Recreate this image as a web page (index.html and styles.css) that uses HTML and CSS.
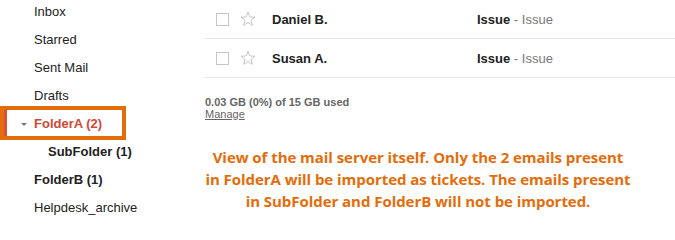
FILE: index.html
```html
<!DOCTYPE html>
<html>
<head>
<meta charset="utf-8">
<link rel="stylesheet" href="styles.css">
</head>
<body>
<div class="page">
  <nav class="sidebar">
    <ul class="folders">
      <li class="folder">Inbox</li>
      <li class="folder">Starred</li>
      <li class="folder">Sent Mail</li>
      <li class="folder">Drafts</li>
      <li class="folder folder-selected"><span class="caret"></span>FolderA (2)<span class="highlight"></span></li>
      <li class="folder folder-sub folder-unread">SubFolder (1)</li>
      <li class="folder folder-unread">FolderB (1)</li>
      <li class="folder">Helpdesk_archive</li>
    </ul>
  </nav>
  <main class="main">
    <div class="mail-list">
      <div class="mail-row">
        <span class="checkbox"></span>
        <svg class="star" viewBox="0 0 16 16" width="16" height="16"><path d="M8 1.2 L9.9 6 L15 6.2 L11 9.4 L12.4 14.4 L8 11.6 L3.6 14.4 L5 9.4 L1 6.2 L6.1 6 Z" fill="none" stroke="#c8c8c8" stroke-width="1" stroke-linejoin="round"/></svg>
        <span class="sender">Daniel B.</span>
        <span class="subject"><b>Issue</b><span class="snippet"> - Issue</span></span>
      </div>
      <div class="mail-row">
        <span class="checkbox"></span>
        <svg class="star" viewBox="0 0 16 16" width="16" height="16"><path d="M8 1.2 L9.9 6 L15 6.2 L11 9.4 L12.4 14.4 L8 11.6 L3.6 14.4 L5 9.4 L1 6.2 L6.1 6 Z" fill="none" stroke="#c8c8c8" stroke-width="1" stroke-linejoin="round"/></svg>
        <span class="sender">Susan A.</span>
        <span class="subject"><b>Issue</b><span class="snippet"> - Issue</span></span>
      </div>
    </div>
    <div class="storage">
      <div class="storage-used">0.03 GB (0%) of 15 GB used</div>
      <a class="storage-manage">Manage</a>
    </div>
    <p class="note">View of the mail server itself. Only the 2 emails present<br>in FolderA will be imported as tickets. The emails present<br>in SubFolder and FolderB will not be imported.</p>
  </main>
</div>
</body>
</html>
```

FILE: styles.css
```css
html, body {
  margin: 0;
  padding: 0;
  background: #ffffff;
}

body {
  font-family: "Liberation Sans", Arial, sans-serif;
  font-size: 13px;
  color: #222222;
  width: 675px;
  height: 225px;
  overflow: hidden;
}

.page {
  display: flex;
  align-items: flex-start;
}

.sidebar {
  width: 205px;
  flex: none;
}

.folders {
  list-style: none;
  margin: -2px 0 0 0;
  padding: 0;
}

.folder {
  position: relative;
  height: 28px;
  line-height: 28px;
  padding-left: 34px;
  white-space: nowrap;
}

.folder-unread {
  font-weight: bold;
}

.folder-sub {
  padding-left: 48px;
}

.folder-selected {
  font-weight: bold;
  color: #d14836;
}

.caret {
  position: absolute;
  left: 21px;
  top: 13px;
  width: 0;
  height: 0;
  border-left: 3px solid transparent;
  border-right: 3px solid transparent;
  border-top: 3px solid #777777;
}

.highlight {
  position: absolute;
  left: 0;
  top: -4px;
  width: 126px;
  height: 34px;
  box-sizing: border-box;
  border: 4px solid #e46c0a;
  box-shadow: inset 3px 0 0 #d6503a;
}

.main {
  flex: 1;
  min-width: 0;
}

.mail-list {
  display: flex;
  flex-direction: column;
}

.mail-row {
  display: flex;
  align-items: center;
  height: 38px;
  border-bottom: 1px solid #e5e5e5;
  padding-left: 11px;
}

.checkbox {
  width: 11px;
  height: 11px;
  border: 1px solid #c6c6c6;
  flex: none;
}

.star {
  flex: none;
  margin-left: 11px;
}

.sender {
  font-weight: bold;
  margin-left: 16px;
  width: 205px;
  flex: none;
}

.subject b {
  font-weight: bold;
  color: #222222;
}

.snippet {
  color: #777777;
}

.storage {
  margin-top: 18px;
  font-size: 11px;
  line-height: 12px;
  color: #666666;
}

.storage-used {
  font-weight: bold;
}

.storage-manage {
  color: #666666;
  text-decoration: underline;
}

.note {
  margin: 26px 0 0 0;
  width: 426px;
  text-align: center;
  font-family: "Open Sans", "Liberation Sans", sans-serif;
  font-weight: bold;
  font-size: 15px;
  line-height: 22px;
  color: #e46c0a;
  letter-spacing: -0.05px;
  white-space: nowrap;
}
```
